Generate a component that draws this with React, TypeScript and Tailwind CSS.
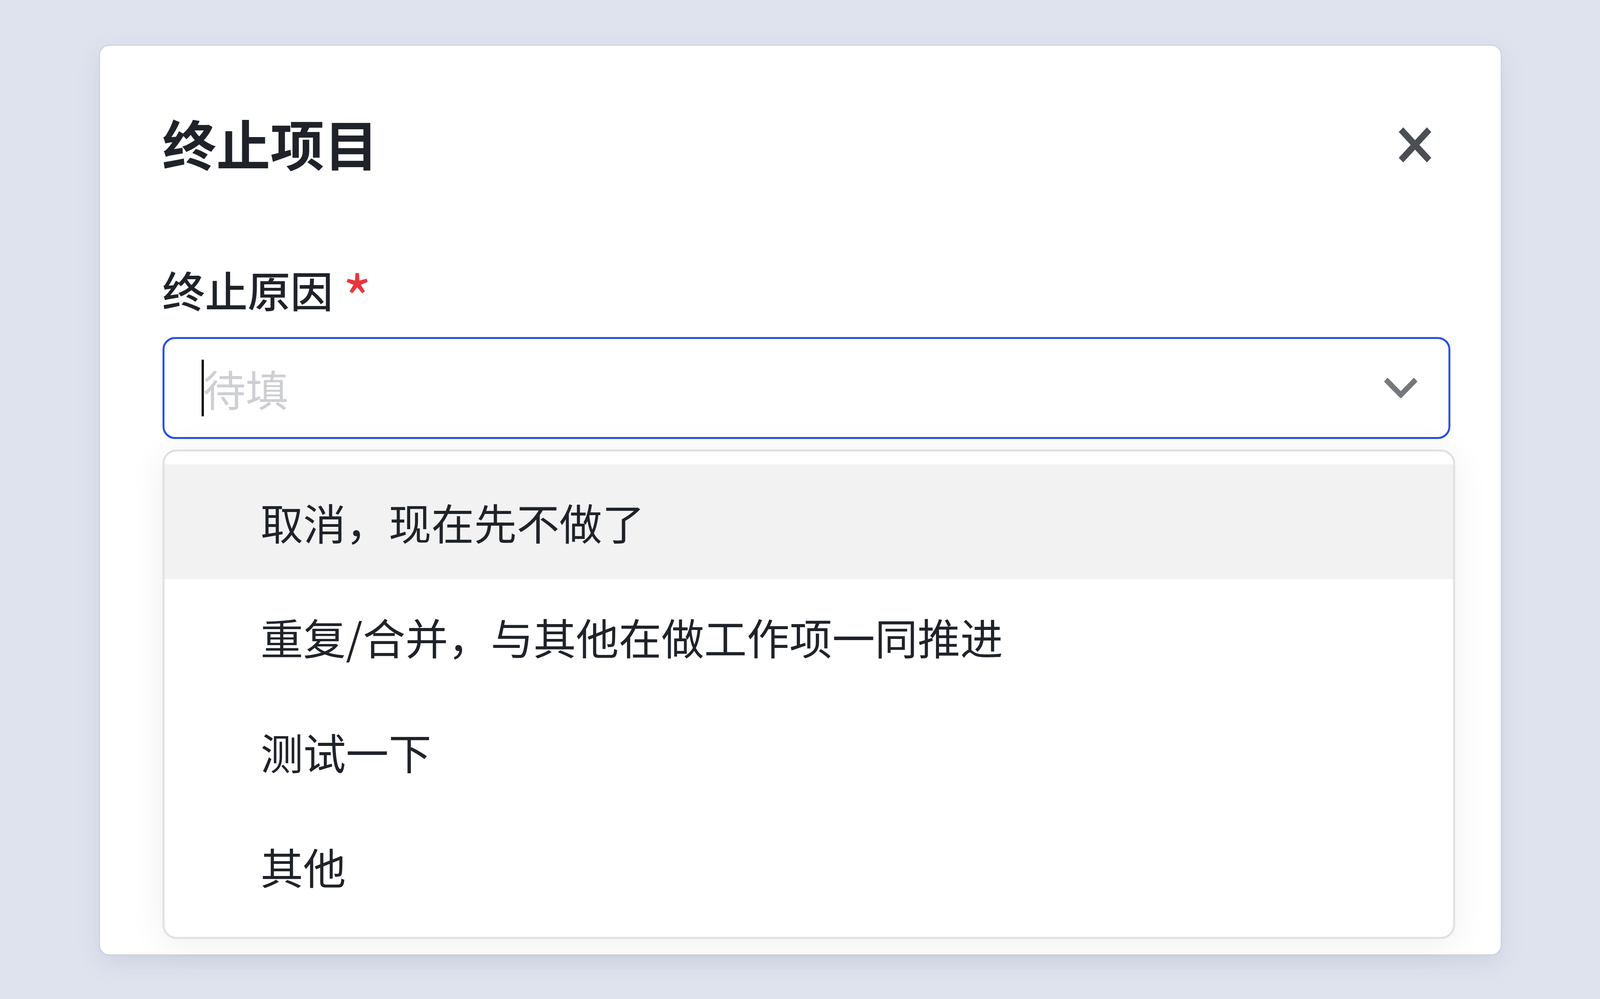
const options = [
  '取消，现在先不做了',
  '重复/合并，与其他在做工作项一同推进',
  '测试一下',
  '其他',
]

const font = "font-['Noto_Sans_CJK_SC','Noto_Sans',sans-serif]"

function CloseIcon() {
  return (
    <svg
      viewBox="0 0 91 92"
      preserveAspectRatio="none"
      fill="none"
      className="w-[2.075vw] h-[92px] mt-[34px] mr-[1.482vw] shrink-0"
    >
      <path d="M7 7 L84 85 M84 7 L7 85" stroke="#4b4e53" strokeWidth="17" />
    </svg>
  )
}

function Chevron() {
  return (
    <svg
      viewBox="0 0 92 52"
      preserveAspectRatio="none"
      fill="none"
      className="w-[2.098vw] h-[52px] shrink-0"
    >
      <path d="M5 5 L46 44 L87 5" stroke="#75787c" strokeWidth="14" />
    </svg>
  )
}

export default function App() {
  return (
    <div className={`w-full min-h-screen bg-[#dfe3ee] pl-[6.247vw] pr-[6.2vw] pt-[117px] ${font}`}>
      <div className="w-full h-[2327px] rounded-[24px] bg-white shadow-[0_0_0_2px_rgba(190,195,208,0.7),0_20px_60px_rgba(120,130,160,0.18)] pl-[3.899vw] pr-[2.85vw] pt-[174px] pb-[40px] flex flex-col">
        {/* 헤더 */}
        <div className="flex items-start justify-between">
          <h1 className="text-[3.374vw] leading-[148px] font-bold text-[#1f2329]">终止项目</h1>
          <CloseIcon />
        </div>

        {/* 라벨 */}
        <div className="mt-[243px] flex items-start h-[117px]">
          <span className="text-[2.668vw] leading-[117px] font-medium text-[#1f2329]">终止原因</span>
          <span className="ml-[0.6vw] mt-[16px] text-[3.9vw] leading-[117px] text-[#e8363b]">*</span>
        </div>

        {/* 입력 */}
        <div className="mt-[64px] mr-[0.296vw] h-[261px] rounded-[32px] border-[5px] border-[#2652e4] bg-white flex items-center pl-[2.326vw] pr-[1.938vw]">
          <span className="w-[6px] h-[145px] bg-[#111111] shrink-0" />
          <span className="-ml-[2px] text-[2.668vw] leading-[117px] text-[#cdcfd3]">待填</span>
          <div className="flex-1" />
          <Chevron />
        </div>

        {/* 드롭다운 */}
        <div className="mt-[27px] h-[1254px] rounded-[36px] border-[5px] border-[#dfe0e3] bg-white py-[33px] shadow-[0_10px_90px_rgba(0,0,0,0.07)] flex flex-col">
          {options.map((o, i) => (
            <div
              key={o}
              className={`h-[294px] shrink-0 flex items-center pl-[6.019vw] text-[2.668vw] leading-[117px] text-[#1f2329] ${i === 0 ? 'bg-[#f2f2f2]' : ''}`}
            >
              {o}
            </div>
          ))}
        </div>
      </div>
    </div>
  )
}
